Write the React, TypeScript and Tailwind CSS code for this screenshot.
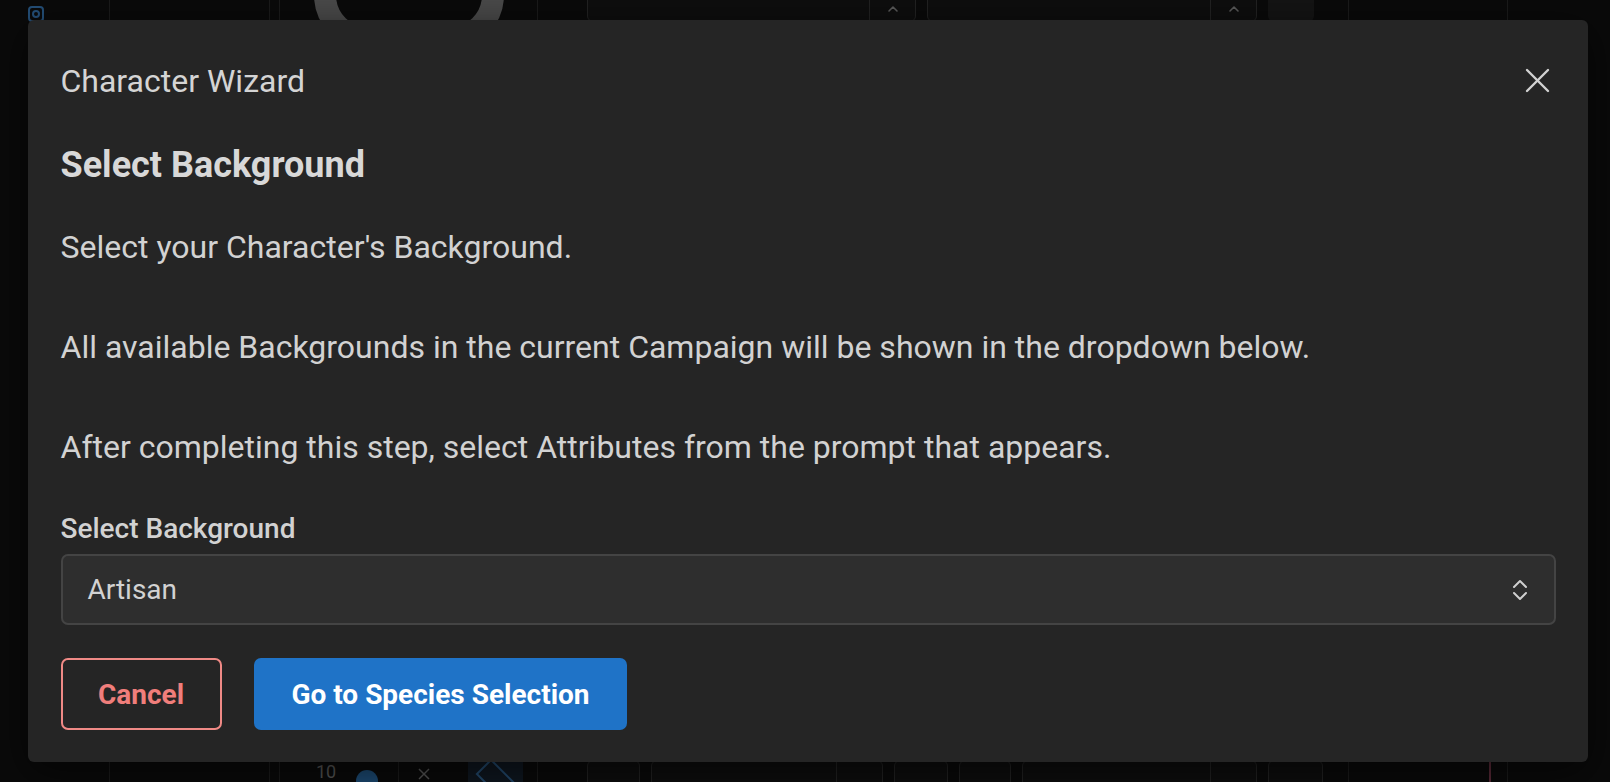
import React from "react";

function ChevronUpDown() {
  return (
    <svg width="16" height="24" viewBox="0 0 16 24" fill="none" stroke="#d0d0d0" strokeWidth="2" strokeLinecap="round" strokeLinejoin="round">
      <polyline points="2,9 8,3 14,9" />
      <polyline points="2,15 8,21 14,15" />
    </svg>
  );
}

function CloseIcon() {
  return (
    <svg width="25" height="25" viewBox="0 0 25 25" fill="none" stroke="#d2d2d2" strokeWidth="2.4" strokeLinecap="round">
      <line x1="2" y1="2" x2="23" y2="23" />
      <line x1="23" y1="2" x2="2" y2="23" />
    </svg>
  );
}

function TinyUp() {
  return (
    <svg width="12" height="8" viewBox="0 0 12 8" fill="none" stroke="#5a5a5a" strokeWidth="1.6" strokeLinecap="round" strokeLinejoin="round">
      <polyline points="2,6 6,2 10,6" />
    </svg>
  );
}

function SmallBox({ w, chevron = true, divider = false }: { w: string; chevron?: boolean; divider?: boolean }) {
  return (
    <div className={`${w} h-[40px] rounded-[6px] border border-[#222] bg-[#0e0e0e] flex items-start justify-end`}>
      {divider && (
        <div className="h-full border-l border-[#222] w-[46px] flex justify-center pt-[22px]">
          <TinyUp />
        </div>
      )}
      {!divider && chevron && (
        <div className="w-full flex justify-center pt-[22px]">
          <TinyUp />
        </div>
      )}
    </div>
  );
}

export default function App() {
  return (
    <div
      className="relative w-[1610px] h-[782px] overflow-hidden bg-[#0a0a0a]"
      style={{ fontFamily: "Roboto, 'Noto Sans', 'Liberation Sans', sans-serif" }}
    >
      {/* dimmed background app */}
      <div className="flex h-full">
        <div className="w-[110px] border-r border-[#1b1b1b] flex flex-col pl-[28px] pt-[6px]">
          <div className="w-[16px] h-[16px] rounded-[4px] border-2 border-[#244f78] flex items-center justify-center">
            <div className="w-[8px] h-[8px] rounded-full border-2 border-[#244f78]" />
          </div>
        </div>
        <div className="w-[160px] border-r border-[#1b1b1b]" />
        <div className="w-[9px] bg-[#0a0a0a]" />
        <div className="w-[259px] border-l border-r border-[#1b1b1b] flex flex-col justify-between">
          <div className="flex justify-center -mt-[60px]">
            <div className="w-[190px] h-[110px] rounded-full border-[22px] border-[#4a4a4a]" />
          </div>
          <div className="flex items-start h-[20px] pl-[36px] gap-[20px]">
            <span className="text-[#555] text-[18px] leading-[20px]">10</span>
            <div className="w-[22px] h-[22px] rounded-full bg-[#1c4a73] mt-[8px]" />
            <div className="h-full border-l border-[#1b1b1b] w-[50px] flex justify-center pt-[6px]">
              <svg width="12" height="12" viewBox="0 0 12 12" stroke="#555" strokeWidth="1.5">
                <line x1="1" y1="1" x2="11" y2="11" />
                <line x1="11" y1="1" x2="1" y2="11" />
              </svg>
            </div>
            <div className="w-[55px] h-full bg-[#0f1720] flex justify-center">
              <div className="w-[36px] h-[22px] border-2 border-[#234a6e] rotate-45 mt-[6px]" />
            </div>
          </div>
        </div>
        <div className="w-[811px] border-r border-[#1b1b1b] flex flex-col justify-between">
          <div className="flex gap-[11px] pl-[49px] -mt-[18px]">
            <SmallBox w="w-[329px]" divider />
            <SmallBox w="w-[330px]" divider />
            <div className="w-[46px] h-[40px] rounded-[6px] bg-[#141414]" />
          </div>
          <div className="flex gap-[11px] pl-[49px] -mb-[18px]">
            <SmallBox w="w-[53px]" />
            <SmallBox w="w-[232px]" divider />
            <SmallBox w="w-[54px]" />
            <SmallBox w="w-[52px]" />
            <SmallBox w="w-[235px]" divider />
            <SmallBox w="w-[55px]" />
          </div>
        </div>
        <div className="w-[159px] border-r border-[#1b1b1b] flex flex-col justify-end items-end pr-[16px]">
          <div className="w-[2px] h-[20px] bg-[#5a2a38]" />
        </div>
        <div className="flex-1" />
      </div>

      {/* modal */}
      <div className="absolute left-[28px] top-[20px] w-[1560px] h-[742px] rounded-[6px] bg-[#252525] shadow-[0_10px_40px_rgba(0,0,0,0.6)] px-[32.5px] pt-[37px] pb-[32px] flex flex-col">
        <div className="flex items-center justify-between h-[48px]">
          <h2 className="text-[32px] leading-[48px] font-normal text-[#d4d4d4]">Character Wizard</h2>
          <button className="mr-[6px] -mt-[1px] flex items-center justify-center">
            <CloseIcon />
          </button>
        </div>

        <h3 className="mt-[38px] text-[36px] leading-[44px] font-bold text-[#d8d8d8]">Select Background</h3>

        <div className="mt-[35px] text-[32px] leading-[50px] text-[#d2d2d2]">
          <p>Select your Character's Background.</p>
          <p className="mt-[50px]">All available Backgrounds in the current Campaign will be shown in the dropdown below.</p>
          <p className="mt-[50px]">After completing this step, select Attributes from the prompt that appears.</p>
        </div>

        <label className="mt-[39px] text-[28px] leading-[36px] font-medium text-[#d2d2d2]">Select Background</label>

        <div className="mt-[7px] h-[71px] rounded-[7px] border-2 border-[#444] bg-[#2e2e2e] flex items-center justify-between pl-[25px] pr-[26px]">
          <span className="text-[28px] text-[#d2d2d2]">Artisan</span>
          <ChevronUpDown />
        </div>

        <div className="mt-[33px] flex gap-[32.5px]">
          <button className="h-[72px] w-[161px] rounded-[7px] border-2 border-[#f08a86] text-[#f07e7b] text-[28px] font-bold flex items-center justify-center pt-[2px]">
            Cancel
          </button>
          <button className="h-[72px] w-[373px] rounded-[7px] bg-[#1f73c7] text-white text-[28px] font-bold flex items-center justify-center pt-[2px]">
            Go to Species Selection
          </button>
        </div>
      </div>
    </div>
  );
}
